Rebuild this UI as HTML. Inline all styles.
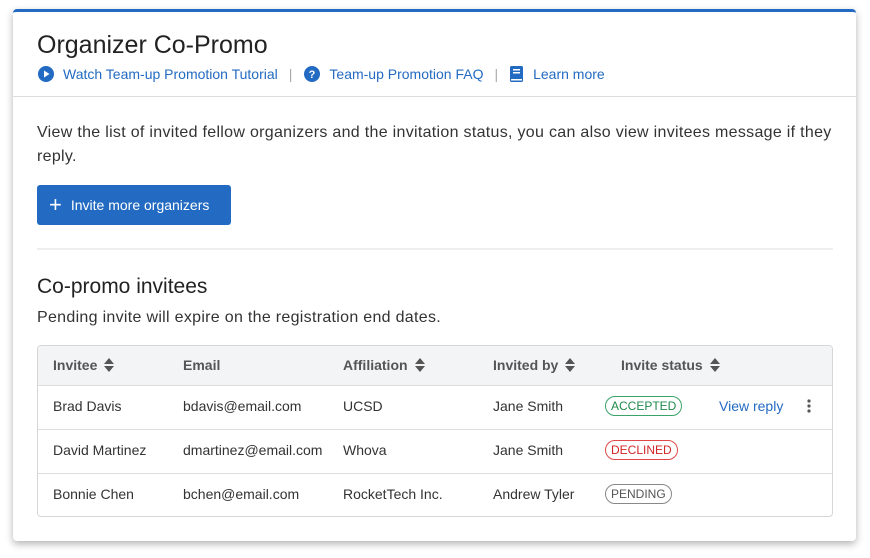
<!DOCTYPE html>
<html><head><meta charset="utf-8"><style>
*{box-sizing:border-box;margin:0;padding:0}
body{width:870px;height:558px;background:#fff;font-family:"Liberation Sans",Arial,sans-serif;color:#222;position:relative;overflow:hidden}
.card{position:absolute;left:13px;top:9px;width:843px;height:532px;background:#fff;border-top:3px solid #236bc2;border-radius:4px;box-shadow:0 3px 8px rgba(0,0,0,.3)}
h1{position:absolute;left:24px;top:19px;font-size:25px;font-weight:normal;color:#222}
.links{position:absolute;left:24px;top:53px;font-size:14px;color:#236bc2;display:flex;align-items:center;white-space:nowrap}
.links svg{margin-right:8px}
.sep{color:#aaa;margin:0 11px}
.hr1{position:absolute;left:0;right:0;top:84px;border-top:1px solid #ddd}
.desc{position:absolute;left:24px;top:109px;width:810px;font-size:16px;letter-spacing:0.3px;line-height:24px;color:#333}
.btn{position:absolute;left:24px;top:173px;width:194px;height:40px;background:#236bc2;border-radius:3px;color:#fff;font-size:14px;display:flex;align-items:center;padding-left:12px}
.btn span.p{font-size:22px;font-weight:300;margin-right:9px;line-height:1}
.hr2{position:absolute;left:24px;width:796px;top:236px;border-top:2px solid #eee}
h2{position:absolute;left:24px;top:263px;font-size:21px;font-weight:normal;color:#222}
.sub{position:absolute;left:24px;top:297px;font-size:16px;letter-spacing:0.3px;color:#333}
.tbl{position:absolute;left:24px;top:333px;width:796px;height:172px;border:1px solid #d6d6d6;border-radius:4px;overflow:hidden;font-size:14px}
.row{position:absolute;left:0;right:0;height:44px;border-top:1px solid #ddd}
.head{top:0;height:39px;background:#f3f4f6;border-top:none;font-weight:bold;color:#555}
.c{position:absolute;top:0;height:100%;display:flex;align-items:center;color:#333;white-space:nowrap;padding-bottom:4px}
.head .c{color:#555;padding-bottom:2px}
.srt{display:inline-block;margin-left:7px;width:10px;height:14px;vertical-align:middle}
.b{font-size:12px;border:1px solid;border-radius:10px;padding:2px 5px;line-height:14px;font-weight:normal}
</style></head><body>
<div class="card">
<h1>Organizer Co-Promo</h1>
<div class="links">
<svg width="18" height="18" viewBox="0 0 18 18"><circle cx="9" cy="9" r="8" fill="#236bc2"/><path d="M7 5.5L12.5 9 7 12.5z" fill="#fff"/></svg>Watch Team-up Promotion Tutorial<span class="sep">|</span>
<svg width="18" height="18" viewBox="0 0 18 18"><circle cx="9" cy="9" r="8" fill="#236bc2"/><text x="9" y="13" font-size="11" font-weight="bold" fill="#fff" text-anchor="middle" font-family="Liberation Sans">?</text></svg>Team-up Promotion FAQ<span class="sep">|</span>
<svg width="16" height="18" viewBox="0 0 16 18"><rect x="1" y="1" width="13" height="16" rx="1.5" fill="#236bc2"/><rect x="4" y="4" width="7" height="1.5" fill="#fff"/><rect x="4" y="7" width="7" height="1.5" fill="#fff"/><rect x="2" y="14" width="11" height="1.5" fill="#fff"/></svg>Learn more
</div>
<div class="hr1"></div>
<div class="desc">View the list of invited fellow organizers and the invitation status, you can also view invitees message if they reply.</div>
<div class="btn"><span class="p">+</span>Invite more organizers</div>
<div class="hr2"></div>
<h2>Co-promo invitees</h2>
<div class="sub">Pending invite will expire on the registration end dates.</div>
<div class="tbl">
<div class="row head">
<div class="c" style="left:15px">Invitee<svg class="srt" viewBox="0 0 10 14"><path d="M5 0L10 6H0zM5 14L0 8h10z" fill="#555"/></svg></div>
<div class="c" style="left:145px">Email</div>
<div class="c" style="left:305px">Affiliation<svg class="srt" viewBox="0 0 10 14"><path d="M5 0L10 6H0zM5 14L0 8h10z" fill="#555"/></svg></div>
<div class="c" style="left:455px">Invited by<svg class="srt" viewBox="0 0 10 14"><path d="M5 0L10 6H0zM5 14L0 8h10z" fill="#555"/></svg></div>
<div class="c" style="left:583px">Invite status<svg class="srt" viewBox="0 0 10 14"><path d="M5 0L10 6H0zM5 14L0 8h10z" fill="#555"/></svg></div>
</div>
<div class="row" style="top:39px">
<div class="c" style="left:15px">Brad Davis</div><div class="c" style="left:145px">bdavis@email.com</div><div class="c" style="left:305px">UCSD</div><div class="c" style="left:455px">Jane Smith</div>
<div class="c" style="left:567px"><span class="b" style="color:#1f8a4c;border-color:#3aa36a">ACCEPTED</span></div>
<div class="c" style="left:681px;color:#236bc2">View reply</div>
<div class="c" style="left:769px"><svg width="4" height="14" viewBox="0 0 4 14"><circle cx="2" cy="2" r="1.6" fill="#555"/><circle cx="2" cy="7" r="1.6" fill="#555"/><circle cx="2" cy="12" r="1.6" fill="#555"/></svg></div>
</div>
<div class="row" style="top:83px">
<div class="c" style="left:15px">David Martinez</div><div class="c" style="left:145px">dmartinez@email.com</div><div class="c" style="left:305px">Whova</div><div class="c" style="left:455px">Jane Smith</div>
<div class="c" style="left:567px"><span class="b" style="color:#d32626;border-color:#e04848">DECLINED</span></div>
</div>
<div class="row" style="top:127px">
<div class="c" style="left:15px">Bonnie Chen</div><div class="c" style="left:145px">bchen@email.com</div><div class="c" style="left:305px">RocketTech Inc.</div><div class="c" style="left:455px">Andrew Tyler</div>
<div class="c" style="left:567px"><span class="b" style="color:#555;border-color:#888">PENDING</span></div>
</div>
</div>
</div>
</body></html>
